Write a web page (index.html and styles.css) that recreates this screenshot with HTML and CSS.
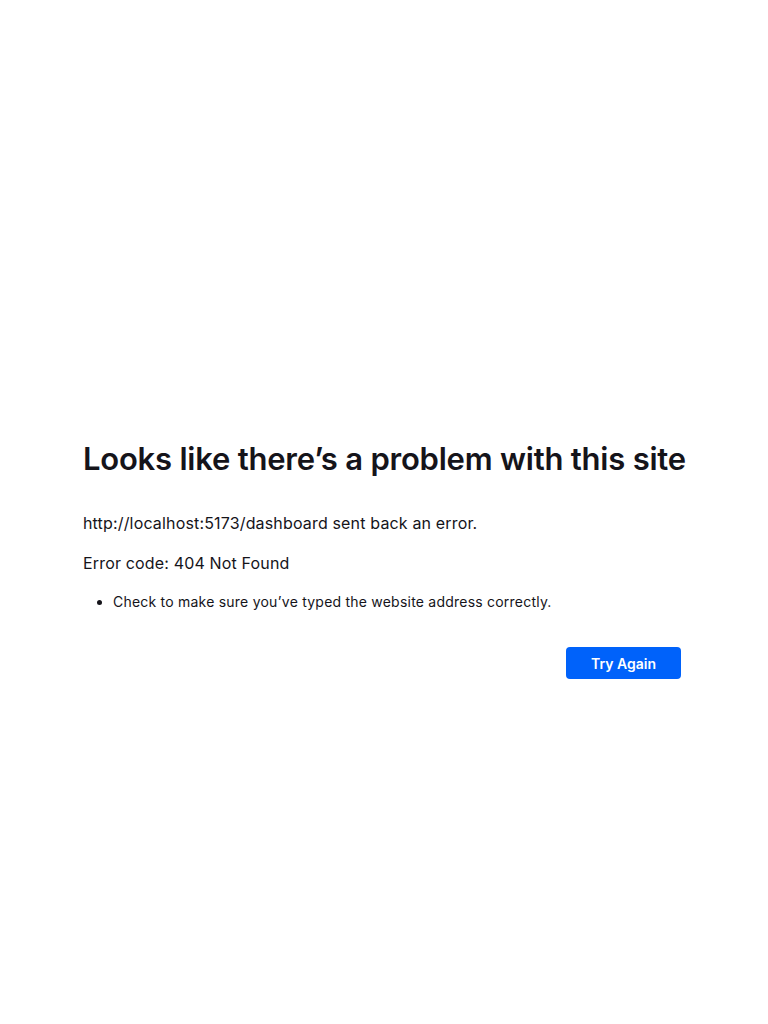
FILE: index.html
```html
<!DOCTYPE html>
<html lang="en">
<head>
<meta charset="utf-8">
<title>Problem loading page</title>
<link rel="stylesheet" href="styles.css">
</head>
<body>
<main class="page">
  <div class="container">
    <h1 class="title">Looks like there’s a problem with this site</h1>
    <p class="line">http://localhost:5173/dashboard sent back an error.</p>
    <p class="line">Error code: 404 Not Found</p>
    <ul class="tips">
      <li>Check to make sure you’ve typed the website address correctly.</li>
    </ul>
    <div class="actions">
      <button class="primary" type="button">Try Again</button>
    </div>
  </div>
</main>
</body>
</html>
```
FILE: styles.css
```css
html, body {
  margin: 0;
  padding: 0;
  background: #ffffff;
}
body {
  font-family: Inter, "Noto Sans", sans-serif;
  color: #15141a;
}
.page {
  display: flex;
  justify-content: center;
  padding: 439px 4px 0 0;
}
.container {
  width: 598px;
}
.title {
  font-size: 31px;
  font-weight: 600;
  letter-spacing: -0.22px;
  margin: 0 0 32px;
  white-space: nowrap;
  line-height: 40px;
}
.line {
  font-size: 16px;
  line-height: 24px;
  margin: 0 0 16px;
  letter-spacing: 0.16px;
}
.tips {
  margin: 0;
  padding-left: 30px;
  font-size: 14px;
  line-height: 21px;
  letter-spacing: 0.22px;
}
.actions {
  display: flex;
  justify-content: flex-end;
  margin-top: 35px;
}
.primary {
  font-family: inherit;
  background: #0062fa;
  color: #fff;
  border: none;
  border-radius: 4px;
  font-size: 14px;
  font-weight: 600;
  height: 32px;
  width: 115px;
  padding: 0;
}
```
